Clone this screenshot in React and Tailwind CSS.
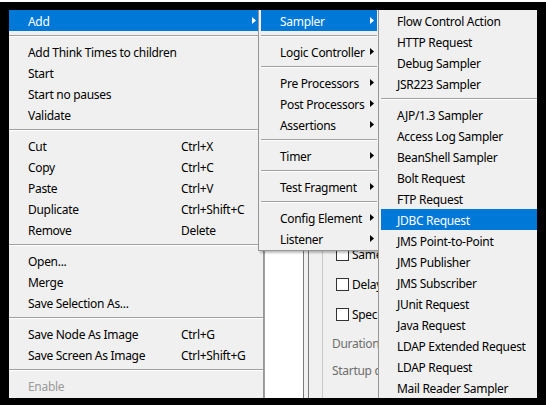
import React from "react";

const Arrow = ({ white }) => (
  <svg width="4" height="7" viewBox="0 0 4 7" className="shrink-0">
    <path d="M0 0 L4 3.5 L0 7 Z" fill={white ? "#ffffff" : "#000000"} />
  </svg>
);

const Sep = () => (
  <div className="h-[10px] flex flex-col justify-center">
    <div className="border-t border-[#a0a0a0] border-b border-b-white" />
  </div>
);

const mainItems = [
  { t: "Add", hl: true, arrow: true },
  "sep",
  { t: "Add Think Times to children" },
  { t: "Start" },
  { t: "Start no pauses" },
  { t: "Validate" },
  "sep",
  { t: "Cut", k: "Ctrl+X" },
  { t: "Copy", k: "Ctrl+C" },
  { t: "Paste", k: "Ctrl+V" },
  { t: "Duplicate", k: "Ctrl+Shift+C" },
  { t: "Remove", k: "Delete" },
  "sep",
  { t: "Open..." },
  { t: "Merge" },
  { t: "Save Selection As..." },
  "sep",
  { t: "Save Node As Image", k: "Ctrl+G" },
  { t: "Save Screen As Image", k: "Ctrl+Shift+G" },
  "sep",
  { t: "Enable", dis: true },
];

const addItems = [
  { t: "Sampler", hl: true },
  "sep",
  { t: "Logic Controller" },
  "sep",
  { t: "Pre Processors" },
  { t: "Post Processors" },
  { t: "Assertions" },
  "sep",
  { t: "Timer" },
  "sep",
  { t: "Test Fragment" },
  "sep",
  { t: "Config Element" },
  { t: "Listener" },
];

const samplerItems = [
  { t: "Flow Control Action" },
  { t: "HTTP Request" },
  { t: "Debug Sampler" },
  { t: "JSR223 Sampler" },
  "sep",
  { t: "AJP/1.3 Sampler" },
  { t: "Access Log Sampler" },
  { t: "BeanShell Sampler" },
  { t: "Bolt Request" },
  { t: "FTP Request" },
  { t: "JDBC Request", hl: true },
  { t: "JMS Point-to-Point" },
  { t: "JMS Publisher" },
  { t: "JMS Subscriber" },
  { t: "JUnit Request" },
  { t: "Java Request" },
  { t: "LDAP Extended Request" },
  { t: "LDAP Request" },
  { t: "Mail Reader Sampler" },
];

const Checkbox = () => (
  <div className="w-[13px] h-[13px] border border-[#333333] bg-white shrink-0" />
);

export default function App() {
  return (
    <div
      className="w-[546px] h-[405px] bg-white pt-[2px] overflow-hidden text-[12px] leading-none tracking-[-0.3px] text-black"
      style={{ fontFamily: '"Noto Sans", "Open Sans", sans-serif' }}
    >
      <div className="w-[546px] h-[403px] bg-black pl-[9px] pt-[8px]">
        <div className="relative w-[528px] h-[388px] bg-[#f0f0f0] overflow-hidden">
          {/* background window */}
          <div className="flex h-full">
            <div className="w-[255px] shrink-0" />
            <div className="w-[40px] shrink-0 bg-white border-l border-[#a0a0a0] border-r border-r-[#7a7a7a]" />
            <div className="w-[4px] shrink-0" />
            <div className="w-[14px] shrink-0 border-l border-[#7a7a7a]" />
            <div className="flex-1 border-l border-[#c8c8c8] flex flex-col pt-[229px]">
              {["Same", "Delay", "Spec"].map((t) => (
                <div key={t} className="h-[30px] flex items-center pl-[13px] gap-[3px]">
                  <Checkbox />
                  <span className="pt-[2px]">{t}</span>
                </div>
              ))}
              <div className="h-[28px] flex items-center pl-[9px] pt-[2px] text-[#6d6d6d]">Duration</div>
              <div className="h-[26px] flex items-center pl-[9px] pt-[2px] text-[#6d6d6d]">Startup d</div>
            </div>
          </div>

          {/* main popup menu */}
          <div className="absolute left-0 top-[-3px] w-[255px] border-r border-[#979797] pt-[3px] bg-[#f0f0f0] pb-[4px]">
            {mainItems.map((it, i) =>
              it === "sep" ? (
                <Sep key={i} />
              ) : (
                <div
                  key={i}
                  className={
                    "h-[21px] flex items-center pl-[19px] pr-[7px] " +
                    (it.hl ? "bg-[#0078d7] text-white" : it.dis ? "text-[#9a9a9a]" : "")
                  }
                >
                  <span className={"pt-[2px] " + (it.k ? "w-[153px] shrink-0" : "flex-1")}>{it.t}</span>
                  {it.k && <span className="pt-[2px]">{it.k}</span>}
                  {it.arrow && <Arrow white />}
                </div>
              )
            )}
          </div>

          {/* Add submenu */}
          <div className="absolute left-[249px] top-[-3px] w-[122px] border border-[#979797] bg-[#f0f0f0] pt-[2px] pb-[1px] px-[2px] shadow-[2px_2px_2px_rgba(0,0,0,0.25)]">
            {addItems.map((it, i) =>
              it === "sep" ? (
                <Sep key={i} />
              ) : (
                <div
                  key={i}
                  className={
                    "h-[21px] flex items-center pl-[19px] pr-[3px] " +
                    (it.hl ? "bg-[#0078d7] text-white" : "")
                  }
                >
                  <span className="flex-1 whitespace-nowrap pt-[2px]">{it.t}</span>
                  <Arrow white={it.hl} />
                </div>
              )
            )}
          </div>

          {/* Sampler submenu */}
          <div className="absolute left-[369px] top-[-3px] w-[175px] border border-[#979797] bg-[#f0f0f0] pt-[2px] pl-[2px]">
            {samplerItems.map((it, i) =>
              it === "sep" ? (
                <Sep key={i} />
              ) : (
                <div
                  key={i}
                  className={
                    "h-[21px] flex items-center pl-[16px] pt-[2px] whitespace-nowrap " +
                    (it.hl ? "bg-[#0078d7] text-white" : "")
                  }
                >
                  {it.t}
                </div>
              )
            )}
          </div>
        </div>
      </div>
    </div>
  );
}
